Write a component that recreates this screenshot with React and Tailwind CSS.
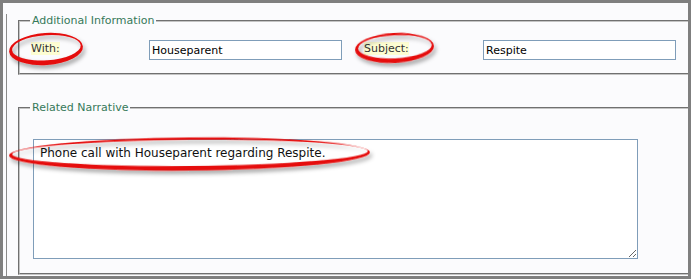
import React from 'react';

// ring path: outer ellipse minus a smaller one nudged up, so the stroke is heavier at the bottom
const ring = (cx, cy, rx, ry) => {
    const e = (x, y, a, b) =>
        `M${x - a} ${y} a${a} ${b} 0 1 0 ${2 * a} 0 a${a} ${b} 0 1 0 ${-2 * a} 0 Z`;
    return e(cx, cy, rx, ry) + ' ' + e(cx + 0.5, cy - 1.2, rx - 2.6, ry - 3.4);
};

const Marks = () => (
    <svg className="absolute inset-0 pointer-events-none" width="691" height="279">
        <defs>
            <filter id="sh" x="-10%" y="-30%" width="130%" height="180%">
                <feDropShadow dx="2" dy="3" stdDeviation="2" floodColor="#000" floodOpacity="0.4" />
            </filter>
        </defs>
        <g fill="#e50a0a" fillRule="evenodd" filter="url(#sh)">
            <path d={ring(46, 49, 37, 16)} transform="rotate(-4 46 49)" />
            <path d={ring(394.5, 48, 39.5, 15)} transform="rotate(-3 394.5 48)" />
            <path d={ring(189.5, 154, 180.5, 16.5)} transform="rotate(-0.5 189.5 154)" />
        </g>
    </svg>
);

const Label = ({ text, width }) => (
    <div className={`${width} pt-[1px]`}>
        <span className="bg-[#fdfdd2] text-[#333] leading-[13px] inline-block">{text}</span>
    </div>
);

const Field = ({ value }) => (
    <input
        readOnly
        value={value}
        className="w-[193px] h-[20px] border border-[#7f9db9] bg-white px-[2px] text-[11px] text-black outline-none font-['DejaVu_Sans',sans-serif]"
    />
);

export default function App() {
    return (
        <div className="relative w-[691px] h-[279px] bg-[#7f7f7f] p-[3px] text-[11px] font-['DejaVu_Sans',sans-serif]">
            <div className="h-full bg-[#fbfbfd] pl-[3px] overflow-hidden">
                <div className="h-full border-l border-[#8a8a8a] pl-[11px]">
                    {/* Additional Information */}
                    <fieldset className="mt-[11px] -mr-[20px] border-2 [border-style:groove] border-[#c4c4c4] pl-[11px] pt-[13px] pb-[13px]">
                        <legend className="ml-[-1px] px-[2px] leading-[13px] text-[#36795a]">Additional Information</legend>
                        <div className="flex items-start">
                            <Label text="With:" width="w-[118px]" />
                            <Field value="Houseparent" />
                            <div className="w-[22px]" />
                            <Label text="Subject:" width="w-[119px]" />
                            <Field value="Respite" />
                        </div>
                    </fieldset>

                    {/* Related Narrative */}
                    <fieldset className="mt-[26px] -mr-[20px] border-2 [border-style:groove] border-[#c4c4c4] pl-[13px] pt-[25px] pb-[14px]">
                        <legend className="ml-[-3px] px-[2px] leading-[13px] text-[#36795a]">Related Narrative</legend>
                        <textarea
                            readOnly
                            value="Phone call with Houseparent regarding Respite."
                            className="block w-[605px] h-[120px] border border-[#7f9db9] bg-white pt-[5px] px-[6px] text-[12px] leading-[16px] text-[#111] outline-none font-['DejaVu_Sans',sans-serif]"
                        />
                    </fieldset>
                </div>
            </div>
            <Marks />
        </div>
    );
}
